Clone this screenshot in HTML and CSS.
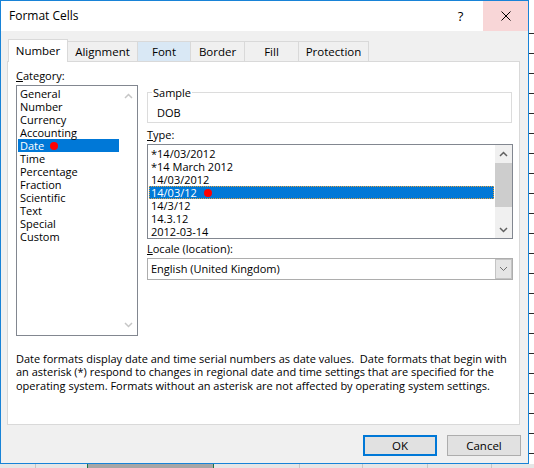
FILE: index.html
```html
<!DOCTYPE html>
<html>
<head>
<meta charset="utf-8">
<title>Format Cells</title>
<link rel="stylesheet" href="styles.css">
</head>
<body>
<div class="screen">
  <div class="sheet">
    <div class="rows"><div class="lines"></div></div>
    <div class="colheads">
      <span class="ch c1"></span>
      <span class="ch c2 edge"></span>
      <span class="ch c3 sel edge"></span>
      <span class="ch c4"></span>
      <span class="ch c5"></span>
      <span class="ch c6"></span>
      <span class="ch c7"></span>
      <span class="ch c8"></span>
    </div>
  </div>

  <div class="dialog">
    <div class="titlebar">
      <span class="title">Format Cells</span>
      <span class="tb-btn help">?</span>
      <span class="tb-btn close">
        <svg width="10" height="10" viewBox="0 0 10 10"><path d="M0.5 0.5 L9.5 9.5 M9.5 0.5 L0.5 9.5" stroke="#000" stroke-width="1" fill="none"/></svg>
      </span>
    </div>

    <div class="body">
      <div class="tabs">
        <div class="tab active t-number">Number</div>
        <div class="tab t-align">Alignment</div>
        <div class="tab hover t-font">Font</div>
        <div class="tab t-border">Border</div>
        <div class="tab t-fill">Fill</div>
        <div class="tab t-prot">Protection</div>
      </div>

      <div class="panel">
        <div class="cols">
          <div class="left">
            <div class="label"><u>C</u>ategory:</div>
            <div class="listbox cat">
              <div class="items">
                <div class="item">General</div>
                <div class="item">Number</div>
                <div class="item">Currency</div>
                <div class="item">Accounting</div>
                <div class="item selected"><span>Date</span><span class="dot cat-dot"></span></div>
                <div class="item">Time</div>
                <div class="item">Percentage</div>
                <div class="item">Fraction</div>
                <div class="item">Scientific</div>
                <div class="item">Text</div>
                <div class="item">Special</div>
                <div class="item">Custom</div>
              </div>
              <div class="vscroll disabled">
                <span class="arrow">
                  <svg width="9" height="6" viewBox="0 0 9 6"><path d="M1 5 L4.5 1.5 L8 5" stroke="#c6c6c6" stroke-width="1.5" fill="none"/></svg>
                </span>
                <span class="track"></span>
                <span class="arrow">
                  <svg width="9" height="6" viewBox="0 0 9 6"><path d="M1 1 L4.5 4.5 L8 1" stroke="#c6c6c6" stroke-width="1.5" fill="none"/></svg>
                </span>
              </div>
            </div>
          </div>

          <div class="right">
            <fieldset class="sample">
              <legend>Sample</legend>
              <div class="sample-val">DOB</div>
            </fieldset>

            <div class="label type-label"><u>T</u>ype:</div>
            <div class="listbox type">
              <div class="items">
                <div class="item">*14/03/2012</div>
                <div class="item">*14 March 2012</div>
                <div class="item">14/03/2012</div>
                <div class="item selected focus"><span>14/03/12</span><span class="dot type-dot"></span></div>
                <div class="item">14/3/12</div>
                <div class="item">14.3.12</div>
                <div class="item">2012-03-14</div>
              </div>
              <div class="vscroll active">
                <span class="arrow">
                  <svg width="9" height="6" viewBox="0 0 9 6"><path d="M1 5 L4.5 1.5 L8 5" stroke="#606060" stroke-width="1.5" fill="none"/></svg>
                </span>
                <span class="track"><span class="thumb"></span></span>
                <span class="arrow">
                  <svg width="9" height="6" viewBox="0 0 9 6"><path d="M1 1 L4.5 4.5 L8 1" stroke="#606060" stroke-width="1.5" fill="none"/></svg>
                </span>
              </div>
            </div>

            <div class="label locale-label"><u>L</u>ocale (location):</div>
            <div class="combo">
              <span class="combo-text">English (United Kingdom)</span>
              <span class="drop">
                <svg width="9" height="6" viewBox="0 0 9 6"><path d="M1 1 L4.5 4.5 L8 1" stroke="#707070" stroke-width="1" fill="none"/></svg>
              </span>
            </div>
          </div>
        </div>

        <p class="desc">Date formats display date and time serial numbers as date values.&nbsp; Date formats that begin with<br>an asterisk (*) respond to changes in regional date and time settings that are specified for the<br>operating system. Formats without an asterisk are not affected by operating system settings.</p>
      </div>

      <div class="buttons">
        <button class="btn ok">OK</button>
        <button class="btn">Cancel</button>
      </div>
    </div>
  </div>
</div>
</body>
</html>
```

FILE: styles.css
```css
* { box-sizing: border-box; }
html, body { margin: 0; padding: 0; }
body {
  width: 534px;
  height: 468px;
  overflow: hidden;
  background: #fff;
  font-family: "Open Sans", "Noto Sans", sans-serif;
  font-size: 11px;
  color: #000;
}
.screen { position: relative; width: 534px; height: 468px; }

/* spreadsheet behind the dialog */
.sheet { display: flex; flex-direction: column; height: 468px; }
.rows { flex: 1; background: #fff; padding-top: 33px; }
.lines {
  height: 100%;
  background: linear-gradient(to bottom, #2b2b2b 0, #2b2b2b 1px, transparent 1px) 0 0 / 100% 20px repeat-y;
}
.colheads { height: 4px; display: flex; background: #e6e6e6; }
.ch { display: block; height: 4px; border-right: 1px solid #c6c6c6; }
.ch.edge { border-right-color: #217346; }
.ch.sel { background: #a6a6a6; }
.c1 { width: 36px; }
.c2 { width: 52px; }
.c3 { width: 126px; }
.c4 { width: 86px; }
.c5 { width: 63px; }
.c6 { width: 65px; }
.c7 { width: 64px; }
.c8 { flex: 1; border-right: 0; }

/* dialog window */
.dialog {
  position: absolute;
  left: 0;
  top: 0;
  width: 529px;
  height: 464px;
  border: 1px solid #1883d7;
  background: #f0f0f0;
  display: flex;
  flex-direction: column;
}
.titlebar {
  height: 30px;
  background: #fff;
  display: flex;
  align-items: stretch;
}
.title {
  flex: 1;
  padding-left: 8px;
  line-height: 30px;
  font-size: 12px;
}
.tb-btn {
  width: 45px;
  display: flex;
  align-items: center;
  justify-content: center;
}
.help { font-size: 13px; padding-bottom: 1px; }
.close { background: #f8d6d7; }

.body {
  flex: 1;
  padding: 8px 8px 7px 6px;
  display: flex;
  flex-direction: column;
}

/* tabs */
.tabs {
  position: relative;
  z-index: 1;
  height: 23px;
  display: flex;
  align-items: flex-start;
  padding-left: 1px;
}
.tab {
  height: 20px;
  margin-top: 2px;
  margin-left: -1px;
  border: 1px solid #d9d9d9;
  border-bottom: 0;
  padding-top: 2px;
  line-height: 15px;
  text-align: center;
  font-size: 11.5px;
}
.tab.active {
  height: 23px;
  margin-top: 0;
  margin-left: 0;
  background: #fff;
  padding-top: 3px;
}
.tab.hover { background: #d9e8f5; }
.t-number { width: 60px; }
.t-align { width: 71px; }
.t-font { width: 54px; }
.t-border { width: 55px; }
.t-fill { width: 55px; }
.t-prot { width: 71px; }

.panel {
  margin-top: -1px;
  height: 364px;
  background: #fff;
  border: 1px solid #d9d9d9;
  padding: 6px 6px 0 8px;
}
.cols { display: flex; }
.left { width: 122px; }
.right { width: 366px; margin-left: 9px; padding-top: 17px; }

.label { height: 15px; line-height: 15px; margin-bottom: 2px; white-space: nowrap; }
.label u { text-decoration: underline; text-underline-offset: 1px; }

.listbox {
  border: 1px solid #828790;
  background: #fff;
  display: flex;
}
.listbox.cat { height: 251px; }
.listbox.type { height: 95px; }
.items { flex: 1; padding: 1px 1px 0 1px; }
.listbox.type .items { padding-top: 2px; }
.item {
  height: 13px;
  line-height: 13px;
  padding-left: 2px;
  white-space: nowrap;
  display: flex;
  align-items: center;
}
.item.selected { background: #0078d7; color: #fff; }
.item.focus { outline: 1px dotted #e0a040; outline-offset: -1px; }

.dot {
  display: block;
  flex: none;
  width: 8px;
  height: 8px;
  border-radius: 50%;
  background: #ff0000;
  margin-top: 1px;
}
.cat-dot { margin-left: 6px; }
.type-dot { margin-left: 7px; }

.vscroll {
  width: 17px;
  display: flex;
  flex-direction: column;
}
.vscroll.active { background: #f0f0f0; }
.vscroll .arrow {
  height: 17px;
  display: flex;
  align-items: center;
  justify-content: center;
}
.vscroll.disabled .arrow { height: 20px; }
.vscroll .track { flex: 1; display: block; }
.thumb {
  display: block;
  margin-top: 1px;
  height: 44px;
  background: #cdcdcd;
}

.sample {
  margin: 0;
  padding: 0 0 2px 4px;
  border: 1px solid #dcdcdc;
  width: 365px;
}
.sample legend { padding: 0 1px; line-height: 15px; }
.sample-val { margin-top: 5px; margin-left: 5px; line-height: 15px; }

.type-label { margin-top: 4px; }
.locale-label { margin-top: 2px; }

.combo {
  height: 22px;
  border: 1px solid #adadad;
  display: flex;
  background: #fff;
}
.combo-text { flex: 1; padding-left: 3px; line-height: 20px; }
.drop {
  width: 17px;
  background: #e5e5e5;
  border: 1px solid #c4c4c4;
  display: flex;
  align-items: center;
  justify-content: center;
}

.desc {
  margin: 16px 0 0 0;
  line-height: 13.3px;
  white-space: nowrap;
}

.buttons {
  margin-top: 10px;
  margin-right: -1px;
  display: flex;
  justify-content: flex-end;
  gap: 10px;
}
.btn {
  width: 74px;
  height: 21px;
  padding: 0;
  font-family: inherit;
  font-size: 11.5px;
  color: #000;
  background: #e1e1e1;
  border: 1px solid #adadad;
  line-height: 17px;
}
.btn.ok { border: 2px solid #0078d7; }
```
